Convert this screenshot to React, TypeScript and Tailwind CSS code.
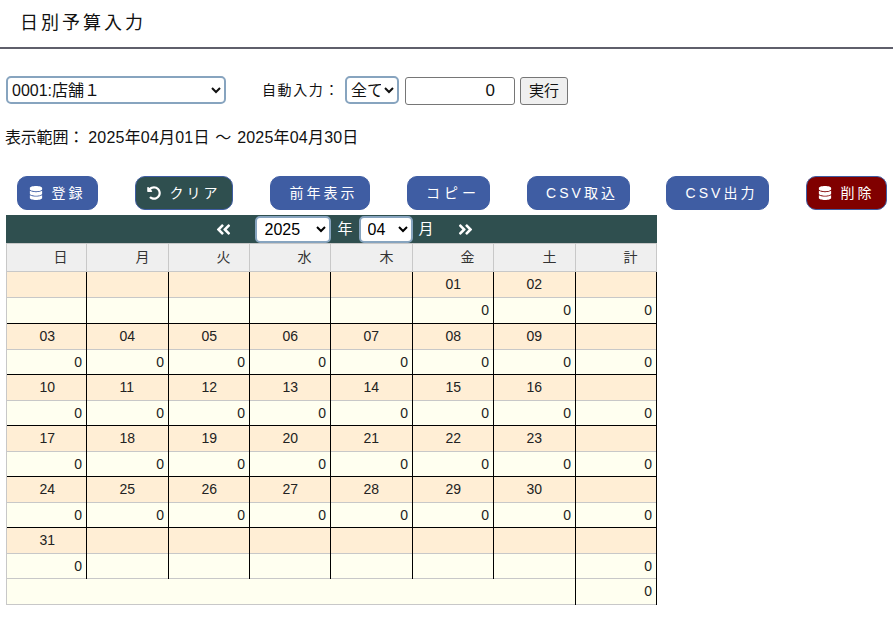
import { FaAngleDoubleLeft, FaAngleDoubleRight, FaDatabase, FaUndoAlt } from 'react-icons/fa';
import type { ReactNode } from 'react';

const FONT = "font-['Liberation_Sans','Noto_Sans_CJK_JP',sans-serif]";
const DAYS = ['日', '月', '火', '水', '木', '金', '土', '計'];
const WIDTHS = [80, 82, 81, 81, 82, 81, 82, 81];

const WEEKS: string[][] = [
  ['', '', '', '', '', '01', '02'],
  ['03', '04', '05', '06', '07', '08', '09'],
  ['10', '11', '12', '13', '14', '15', '16'],
  ['17', '18', '19', '20', '21', '22', '23'],
  ['24', '25', '26', '27', '28', '29', '30'],
  ['31', '', '', '', '', '', ''],
];

function ActionButton({ width, tone = 'blue', children }: { width: string; tone?: 'blue' | 'green' | 'red'; children: ReactNode }) {
  const toneClass =
    tone === 'green'
      ? 'bg-[#2f4f4f] border-[#3f5da3]'
      : tone === 'red'
        ? 'bg-[#800000] border-[#3f5da3]'
        : 'bg-[#3f5da3] border-[#3f5da3]';
  return (
    <button className={`${width} ${toneClass} h-[34px] shrink-0 rounded-[10px] border text-[14px] tracking-[3px] text-white flex items-center justify-center gap-[9px]`}>
      {children}
    </button>
  );
}

function WeekRows({ dates, first }: { dates: string[]; first: boolean }) {
  return (
    <>
      <tr className="h-[26px] bg-[#ffeed5] border-t border-t-black">
        {dates.map((d, i) => (
          <td key={i} className="border-r border-r-black pl-[32.5px] text-[14px] text-[#222] first:border-l first:border-l-[#c8c8c8]">
            {d}
          </td>
        ))}
        <td className="border-x border-x-black" />
      </tr>
      <tr className={`${first ? 'h-[26px]' : 'h-[25px]'} bg-[#fffff0] border-t border-t-[#c8c8c8]`}>
        {dates.map((d, i) => (
          <td key={i} className="border-r border-r-black pr-[4px] text-right text-[14px] text-[#222] first:border-l first:border-l-[#c8c8c8]">
            {d ? '0' : ''}
          </td>
        ))}
        <td className="border-x border-x-black pr-[4px] text-right text-[14px] text-[#222]">0</td>
      </tr>
    </>
  );
}

export default function App() {
  return (
    <div className={`${FONT} w-[893px] h-[632px] bg-white text-[#111] overflow-hidden`}>
      <header className="h-[49px] border-b-2 border-b-[#5f5f6b] pl-[20px] pt-[11px] text-[18px] leading-[24px] tracking-[3px]">
        日別予算入力
      </header>

      <div className="flex items-center h-[30px] mt-[26px] pl-[6px] text-[14px]">
        <select className="w-[220px] h-[28px] rounded-[5px] border-2 border-[#87a4bf] bg-white text-[16px]">
          <option>0001:店舗１</option>
        </select>
        <span className="ml-[36px] tracking-[1.6px]">自動入力：</span>
        <select className="ml-[5px] w-[54px] h-[28px] rounded-[5px] border-2 border-[#87a4bf] bg-white text-[16px]">
          <option>全て</option>
        </select>
        <input
          readOnly
          value="0"
          className="ml-[6px] w-[110px] h-[28px] mt-[2px] rounded-[3px] border border-[#767676] pr-[19px] text-right text-[17px]"
        />
        <button className="ml-[5px] w-[48px] h-[28px] mt-[2px] rounded-[3px] border border-[#767676] bg-[#efefef] text-[15px]">実行</button>
      </div>

      <p className="mt-[23px] pl-[5px] text-[16px] leading-[20px] tracking-[0.2px]">
        <span className="tracking-[-0.2px]">表示範囲： </span>
        2025年04月01日 <span className="mx-[1px]">～</span> 2025年04月30日
      </p>

      <div className="flex gap-[37px] pl-[17px] mt-[28px]">
        <ActionButton width="w-[81px]">
          <FaDatabase className="text-[14px] -ml-[1px]" />
          登録
        </ActionButton>
        <ActionButton width="w-[98px]" tone="green">
          <FaUndoAlt className="text-[14px] -ml-[1px]" />
          クリア
        </ActionButton>
        <ActionButton width="w-[100px] pl-[7px]">前年表示</ActionButton>
        <ActionButton width="w-[83px] pl-[9px] tracking-[4px]">コピー</ActionButton>
        <ActionButton width="w-[103px] pl-[7px]">CSV取込</ActionButton>
        <ActionButton width="w-[103px] -ml-[1px] pl-[8px]">CSV出力</ActionButton>
        <ActionButton width="w-[81px]" tone="red">
          <FaDatabase className="text-[14px] -ml-[1px]" />
          削除
        </ActionButton>
      </div>

      <div className="ml-[6px] mt-[5px] w-[651px]">
        <div className="h-[28px] bg-[#2f4f4f] flex items-center justify-center gap-[6px] pl-[26px] text-[15px] text-white">
          <FaAngleDoubleLeft className="text-[17px] mr-[17px]" />
          <select className="w-[76px] h-[27px] rounded-[5px] border-2 border-[#87a4bf] bg-white text-[16px] text-black pl-[3px]">
            <option>2025</option>
          </select>
          <span>年</span>
          <select className="w-[54px] h-[27px] rounded-[5px] border-2 border-[#87a4bf] bg-white text-[16px] text-black pl-[3px]">
            <option>04</option>
          </select>
          <span>月</span>
          <FaAngleDoubleRight className="text-[17px] ml-[17px]" />
        </div>
        <table className="table-fixed border-collapse w-[650px]">
          <colgroup>
            {WIDTHS.map((w, i) => (
              <col key={i} style={{ width: w }} />
            ))}
          </colgroup>
          <thead>
            <tr className="h-[28px] bg-[#efefef]">
              {DAYS.map((d) => (
                <th key={d} className="border border-[#c8c8c8] pr-[18.5px] text-right text-[14px] font-normal text-[#333]">
                  {d}
                </th>
              ))}
            </tr>
          </thead>
          <tbody>
            {WEEKS.map((w, i) => (
              <WeekRows key={w.join('-')} dates={w} first={i === 0} />
            ))}
            <tr className="h-[26px] bg-[#fffff0] border-y border-[#c8c8c8]">
              <td colSpan={7} className="border-l border-l-[#c8c8c8] border-r border-r-black" />
              <td className="border-r border-r-black pr-[4px] text-right text-[14px] text-[#222]">0</td>
            </tr>
          </tbody>
        </table>
      </div>
    </div>
  );
}
